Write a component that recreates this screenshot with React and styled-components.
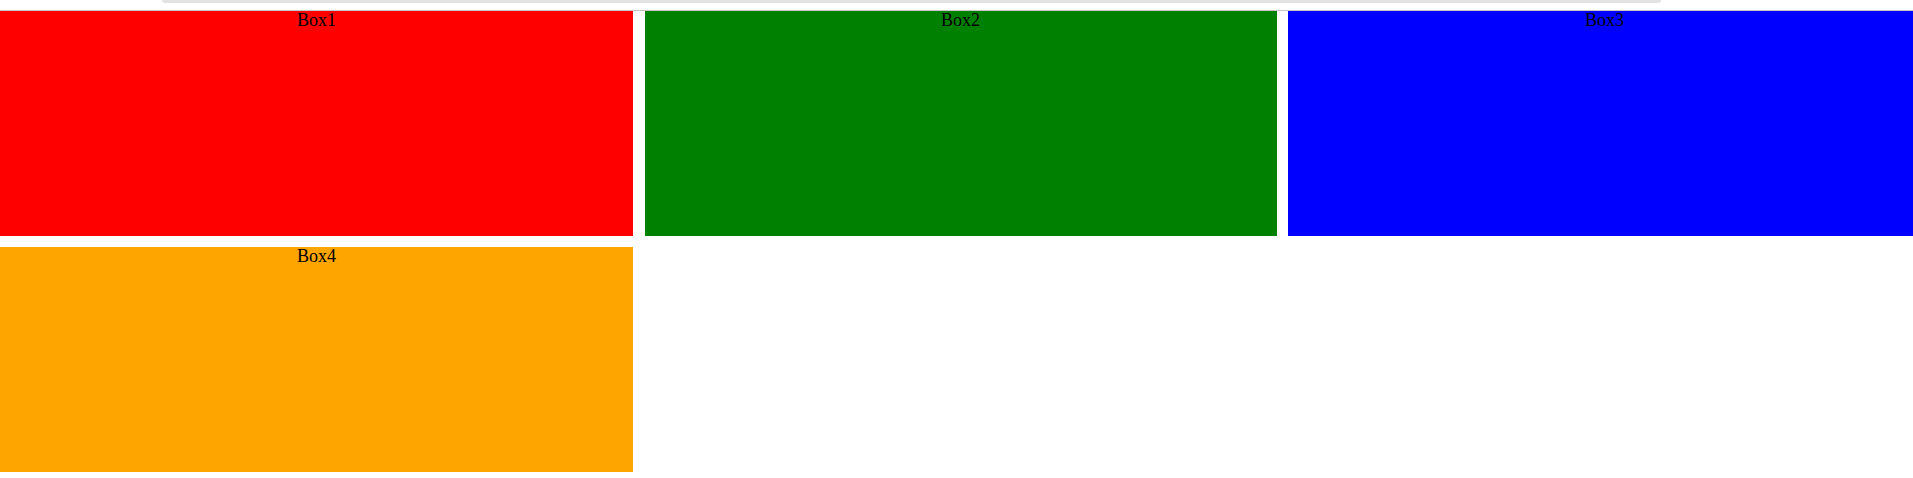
import styled, { createGlobalStyle } from 'styled-components';

const GlobalStyle = createGlobalStyle`
  html, body {
    margin: 0;
    padding: 0;
    background: #ffffff;
    overflow: hidden;
  }
  body {
    font-family: 'Liberation Serif', 'Times New Roman', serif;
  }
`;

const TopBar = styled.header`
  height: 10px;
  border-bottom: 1px solid #c6c6c6;
  padding: 0 252px 0 162px;
`;

const SearchEdge = styled.div`
  height: 3px;
  background: #e2e2e2;
  border-radius: 0 0 6px 6px;
`;

const Grid = styled.main`
  display: grid;
  grid-template-columns: 633px 632px 633px;
  grid-auto-rows: 225px;
  column-gap: 11.5px;
  row-gap: 11px;
`;

const Box = styled.div`
  background: ${(p) => p.$color};
  color: #000000;
  font-size: 18px;
  line-height: 19px;
  text-align: center;
`;

const boxes = [
  { name: 'Box1', color: '#ff0000' },
  { name: 'Box2', color: '#008000' },
  { name: 'Box3', color: '#0000ff' },
  { name: 'Box4', color: '#ffa500' },
];

function App() {
  return (
    <>
      <GlobalStyle />
      <TopBar>
        <SearchEdge />
      </TopBar>
      <Grid>
        {boxes.map((box) => (
          <Box key={box.name} $color={box.color}>
            {box.name}
          </Box>
        ))}
      </Grid>
    </>
  );
}

export default App;
